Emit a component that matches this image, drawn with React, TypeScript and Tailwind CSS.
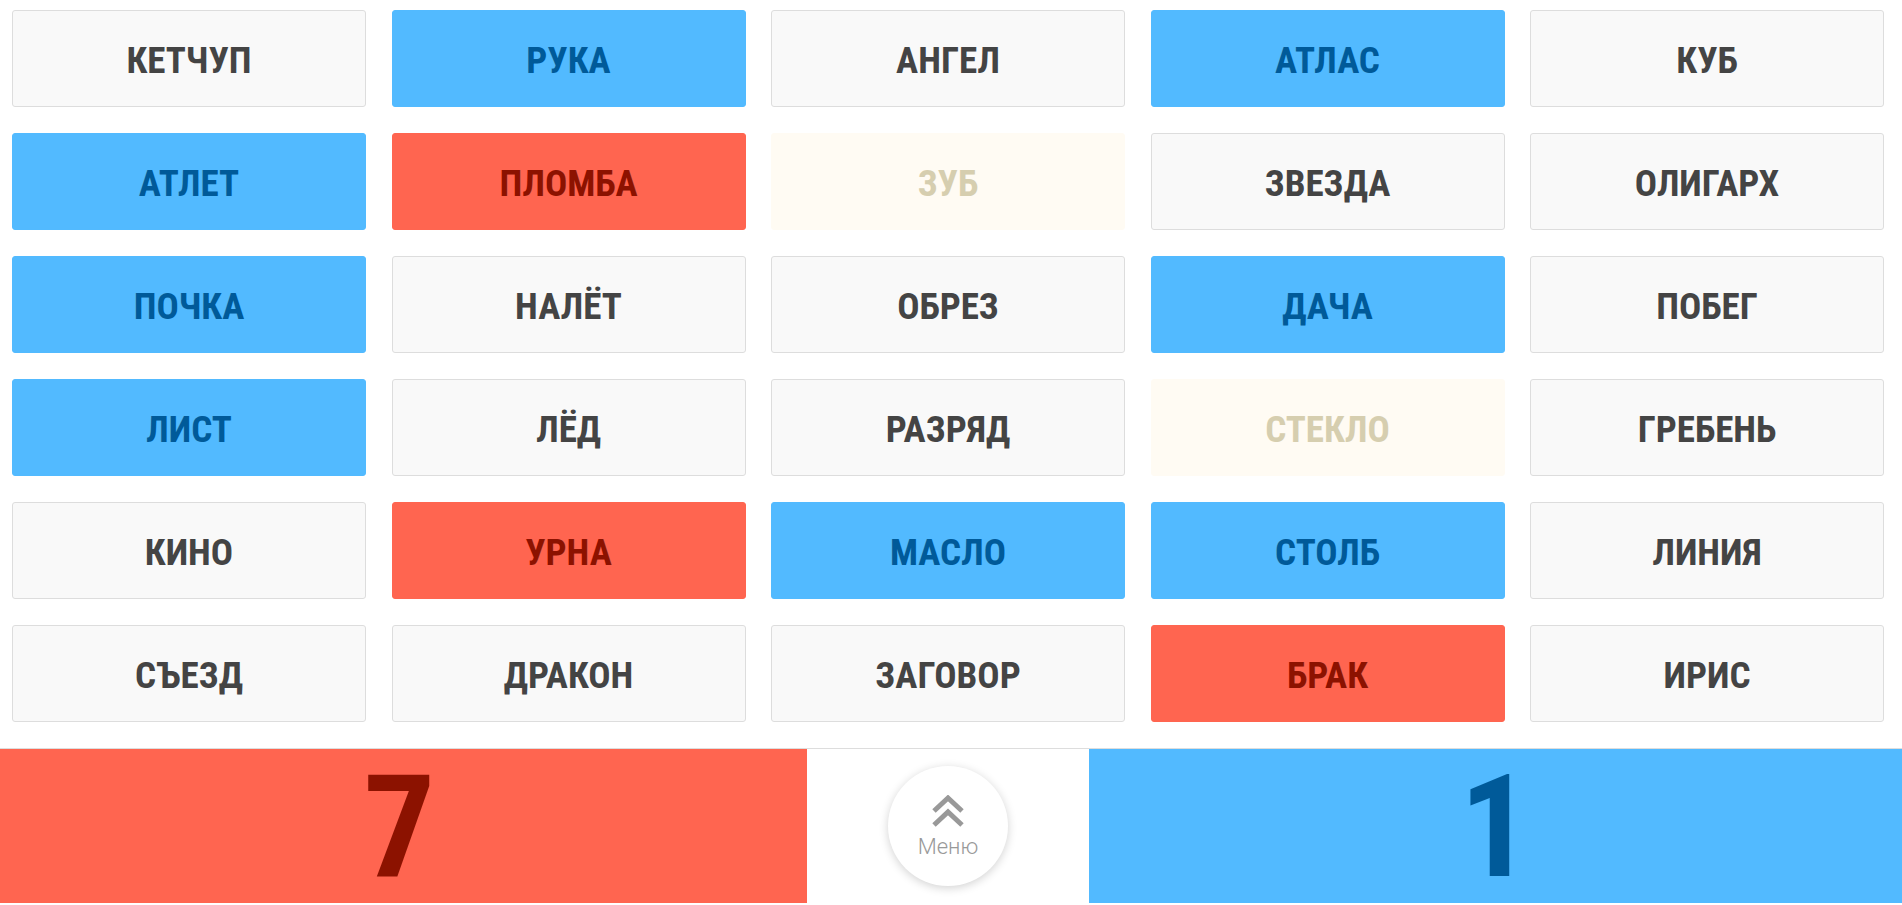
import React from "react";

type Kind = "n" | "b" | "r" | "y";

const rows: [string, Kind][][] = [
  [["КЕТЧУП", "n"], ["РУКА", "b"], ["АНГЕЛ", "n"], ["АТЛАС", "b"], ["КУБ", "n"]],
  [["АТЛЕТ", "b"], ["ПЛОМБА", "r"], ["ЗУБ", "y"], ["ЗВЕЗДА", "n"], ["ОЛИГАРХ", "n"]],
  [["ПОЧКА", "b"], ["НАЛЁТ", "n"], ["ОБРЕЗ", "n"], ["ДАЧА", "b"], ["ПОБЕГ", "n"]],
  [["ЛИСТ", "b"], ["ЛЁД", "n"], ["РАЗРЯД", "n"], ["СТЕКЛО", "y"], ["ГРЕБЕНЬ", "n"]],
  [["КИНО", "n"], ["УРНА", "r"], ["МАСЛО", "b"], ["СТОЛБ", "b"], ["ЛИНИЯ", "n"]],
  [["СЪЕЗД", "n"], ["ДРАКОН", "n"], ["ЗАГОВОР", "n"], ["БРАК", "r"], ["ИРИС", "n"]],
];

const kindClass: Record<Kind, string> = {
  n: "bg-[#f9f9f9] border border-[#dddddd] text-[#444444]",
  b: "bg-[#52baff] border border-[#52baff] text-[#005a99]",
  r: "bg-[#ff6550] border border-[#ff6550] text-[#8c1200]",
  y: "bg-[#fffbf3] border border-[#fffbf3] text-[#d6ceaf]",
};

function Card({ word, kind }: { word: string; kind: Kind }) {
  return (
    <div
      className={`h-[97px] rounded-[3px] flex items-center justify-center pt-[3px] font-bold text-[37px] leading-none ${kindClass[kind]}`}
    >
      {word}
    </div>
  );
}

export default function App() {
  return (
    <div
      className="w-[1902px] h-[905px] bg-white overflow-hidden flex flex-col"
      style={{ fontFamily: '"Roboto Condensed", Roboto, "Liberation Sans", sans-serif' }}
    >
      <div className="pt-[10px] pl-[12px] pr-[18px] grid grid-cols-5 gap-x-[25.5px] gap-y-[26px]">
        {rows.flat().map(([w, k], i) => (
          <Card key={i} word={w} kind={k} />
        ))}
      </div>
      <div className="mt-[26px] flex h-[155px] border-t border-[#dddddd]">
        <div className="w-[807px] bg-[#ff6550] flex items-center justify-center pt-[4px]">
          <span className="text-[#8c1200] font-bold text-[142px] leading-none pr-[8px]">7</span>
        </div>
        <div className="w-[282px] bg-white flex justify-center pt-[17px]">
          <div
            className="w-[120px] h-[120px] rounded-full bg-white flex flex-col items-center justify-start pt-[29px] shadow-[0_2px_10px_rgba(0,0,0,0.18)]"
            style={{ fontFamily: 'Roboto, "Liberation Sans", sans-serif' }}
          >
            <svg width="34" height="32" viewBox="0 0 34 32" fill="none" stroke="#999999" strokeWidth="5" strokeLinecap="butt" strokeLinejoin="miter">
              <polyline points="3,16 17,3 31,16" />
              <polyline points="3,30 17,17 31,30" />
            </svg>
            <span className="mt-[9px] text-[22px] font-light text-[#999999] leading-none">Меню</span>
          </div>
        </div>
        <div className="flex-1 bg-[#52baff] flex items-center justify-center pt-[4px]">
          <span className="text-[#005a99] font-bold text-[142px] leading-none">1</span>
        </div>
      </div>
    </div>
  );
}
